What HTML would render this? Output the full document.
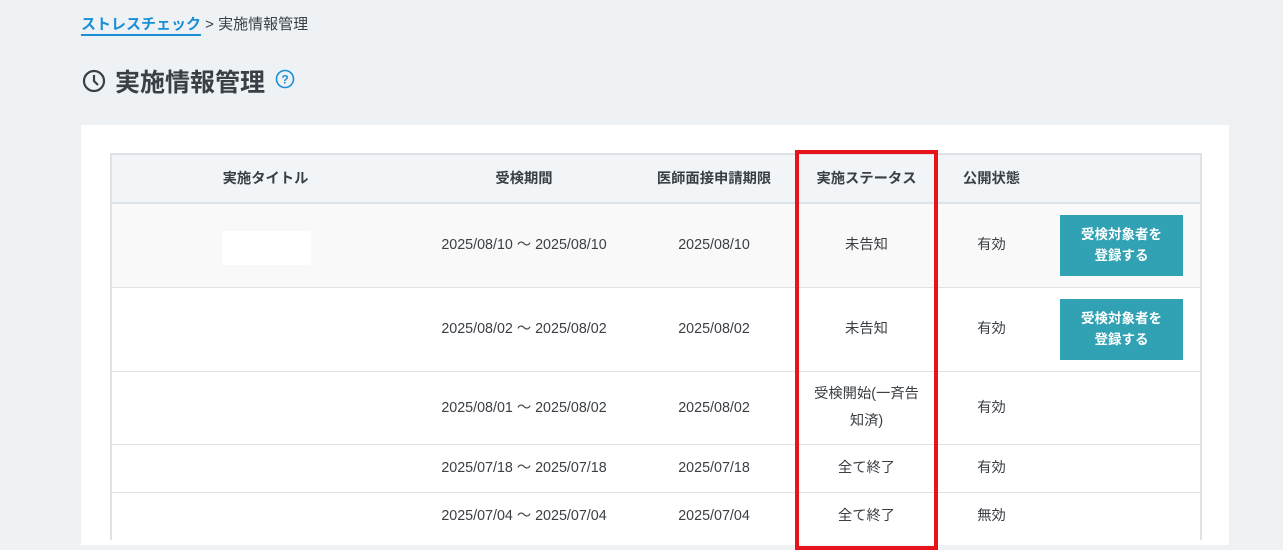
<!DOCTYPE html>
<html><head><meta charset="utf-8"><style>
*{margin:0;padding:0;box-sizing:border-box}
body{width:1283px;height:538px;overflow:hidden;background:#eef2f5;font-family:"Liberation Sans","Noto Sans CJK JP",sans-serif;color:#3a3f45;position:relative}
.bc{position:absolute;left:81px;top:13px;font-size:15px;color:#3a3f45}
.bc a{color:#1a8fd6;font-weight:bold;border-bottom:2px solid #1a8fd6;padding-bottom:1px;text-decoration:none}
.h1{position:absolute;left:82px;top:63px;font-size:25px;font-weight:bold;color:#3a3f45;display:flex;align-items:center}
.card{position:absolute;left:81px;top:125px;width:1148px;height:420px;background:#fff}
table{position:absolute;left:110px;top:153px;width:1090px;border-collapse:collapse;font-size:14.3px;table-layout:fixed}
td,th{border-top:1px solid #dde2e8;text-align:center;vertical-align:middle;line-height:22px}
table{border:2px solid #dde2e8;border-bottom:none}
th{height:49px;background:#f2f5f8;font-weight:bold;color:#3a3f45;border-bottom:2px solid #dde2e8}
.btn{display:inline-block;width:123px;height:61px;background:#31a2b3;color:#fff;font-weight:bold;font-size:13.5px;line-height:21px;padding-top:9px;margin-right:6px}
.red{position:absolute;left:795px;top:150px;width:143px;height:400px;border:4px solid #e8141c}
</style></head><body>
<div class="bc"><a>ストレスチェック</a> &gt; 実施情報管理</div>
<div class="h1"><svg width="24" height="24" viewBox="0 0 24 24" style="margin-right:9px"><circle cx="12" cy="12" r="10" fill="none" stroke="#3a3f45" stroke-width="2.2"/><path d="M12 6v6l4 4" fill="none" stroke="#3a3f45" stroke-width="2.2"/></svg>実施情報管理<svg width="20" height="20" viewBox="0 0 20 20" style="margin-left:10px;margin-top:-4px"><circle cx="10" cy="10" r="8.5" fill="none" stroke="#1a8fd6" stroke-width="1.6"/><text x="10" y="14.5" font-size="12" font-weight="bold" fill="#1a8fd6" text-anchor="middle" font-family="Liberation Sans">?</text></svg></div>
<div class="card"></div>
<table>
<colgroup><col style="width:308px"><col style="width:210px"><col style="width:170px"><col style="width:135px"><col style="width:115px"><col style="width:152px"></colgroup>
<tr><th>実施タイトル</th><th>受検期間</th><th>医師面接申請期限</th><th>実施ステータス</th><th>公開状態</th><th></th></tr>
<tr style="height:84px;background:#f9f9fa"><td><div style="width:89px;height:34px;background:#fff;margin:6px 0 0 110px"></div></td><td>2025/08/10 〜 2025/08/10</td><td>2025/08/10</td><td>未告知</td><td>有効</td><td><span class="btn">受検対象者を<br>登録する</span></td></tr>
<tr style="height:84px"><td></td><td>2025/08/02 〜 2025/08/02</td><td>2025/08/02</td><td>未告知</td><td>有効</td><td><span class="btn">受検対象者を<br>登録する</span></td></tr>
<tr style="height:73px"><td></td><td>2025/08/01 〜 2025/08/02</td><td>2025/08/02</td><td style="line-height:27px">受検開始(一斉告<br>知済)</td><td>有効</td><td></td></tr>
<tr style="height:48px"><td></td><td>2025/07/18 〜 2025/07/18</td><td>2025/07/18</td><td>全て終了</td><td>有効</td><td></td></tr>
<tr style="height:48px"><td></td><td>2025/07/04 〜 2025/07/04</td><td>2025/07/04</td><td>全て終了</td><td>無効</td><td></td></tr>
</table>
<div class="red"></div>
</body></html>
